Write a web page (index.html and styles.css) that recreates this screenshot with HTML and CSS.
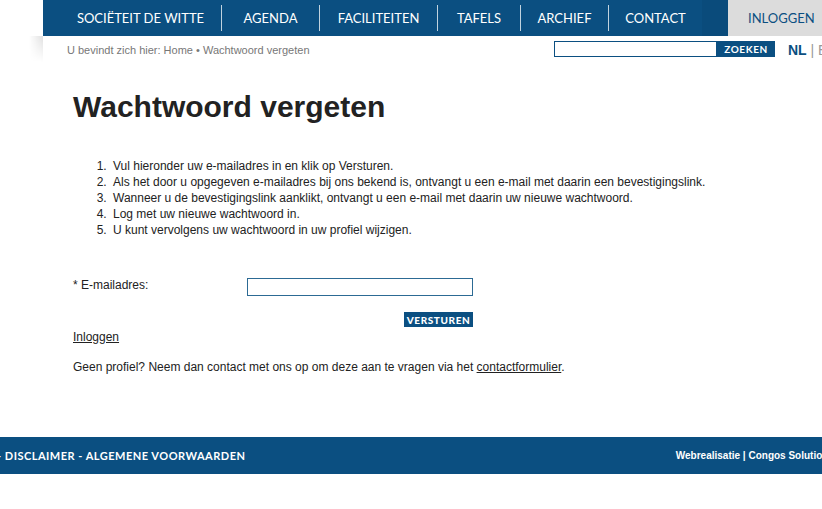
FILE: index.html
```html
<!DOCTYPE html>
<html lang="nl">
<head>
<meta charset="utf-8">
<title>Wachtwoord vergeten</title>
<link rel="stylesheet" href="styles.css">
</head>
<body>
<div class="site">
  <header class="topbar">
    <nav class="mainnav">
      <a class="nav-item w1" href="#">SOCIËTEIT DE WITTE</a>
      <a class="nav-item w2 sep" href="#">AGENDA</a>
      <a class="nav-item w3 sep" href="#">FACILITEITEN</a>
      <a class="nav-item w4 sep" href="#">TAFELS</a>
      <a class="nav-item w5 sep" href="#">ARCHIEF</a>
      <a class="nav-item w6 sep" href="#">CONTACT</a>
      <span class="nav-gap"></span>
    </nav>
    <a class="login-tab" href="#">INLOGGEN</a>
  </header>
  <div class="subbar">
    <div class="breadcrumb">U bevindt zich hier: Home • Wachtwoord vergeten</div>
    <form class="search">
      <input class="search-input" type="text">
      <button class="search-btn" type="button">ZOEKEN</button>
    </form>
    <div class="lang"><b>NL</b> <span class="pipe">|</span> <span class="en">EN</span></div>
  </div>
  <main class="content">
    <h1 class="title">Wachtwoord vergeten</h1>
    <ol class="steps">
      <li>Vul hieronder uw e-mailadres in en klik op Versturen.</li>
      <li>Als het door u opgegeven e-mailadres bij ons bekend is, ontvangt u een e-mail met daarin een bevestigingslink.</li>
      <li>Wanneer u de bevestigingslink aanklikt, ontvangt u een e-mail met daarin uw nieuwe wachtwoord.</li>
      <li>Log met uw nieuwe wachtwoord in.</li>
      <li>U kunt vervolgens uw wachtwoord in uw profiel wijzigen.</li>
    </ol>
    <form class="reset-form">
      <div class="field">
        <label class="field-label">* E-mailadres:</label>
        <input class="field-input" type="text">
      </div>
      <div class="actions">
        <button class="submit" type="button">VERSTUREN</button>
      </div>
    </form>
    <p class="login-link"><a href="#">Inloggen</a></p>
    <p class="note">Geen profiel? Neem dan contact met ons op om deze aan te vragen via het <a href="#">contactformulier</a>.</p>
  </main>
</div>
<footer class="footer">
  <div class="footer-links">- DISCLAIMER - ALGEMENE VOORWAARDEN</div>
  <div class="credits">Webrealisatie | Congos Solutions</div>
</footer>
</body>
</html>
```
FILE: styles.css
```css
html, body {
  margin: 0;
  padding: 0;
  background: #fff;
  overflow: hidden;
}
body {
  font-family: "Liberation Sans", Arial, sans-serif;
  color: #222;
  width: 822px;
}
a { color: inherit; }

.site {
  margin-left: 43px;
  width: 900px;
}

/* top navigation */
.topbar {
  display: flex;
  height: 36px;
  background: #0b4f81;
}
.mainnav {
  display: flex;
  align-items: center;
  height: 36px;
  padding-left: 17px;
}
.nav-item {
  display: block;
  text-align: center;
  color: #fff;
  text-decoration: none;
  font-family: Lato, "Open Sans", sans-serif;
  font-size: 13px;
  line-height: 26px;
  box-sizing: border-box;
}
.sep {
  border-left: 1px solid rgba(255,255,255,0.75);
}
.w1 { width: 161px; }
.w2 { width: 98px; }
.w3 { width: 118px; }
.w4 { width: 83px; }
.w5 { width: 88px; }
.w6 { width: 94px; }
.nav-gap {
  display: block;
  width: 26px;
  height: 36px;
  background: #0a4b7b;
}
.login-tab {
  flex: 1;
  background: #dcdcdc;
  color: #0b4f81;
  text-decoration: none;
  font-family: Lato, "Open Sans", sans-serif;
  font-size: 13px;
  line-height: 36px;
  padding-left: 20px;
}

/* breadcrumb + search */
.subbar {
  position: relative;
  display: flex;
  align-items: flex-start;
  height: 28px;
}
.subbar::before {
  content: "";
  position: absolute;
  left: -14px;
  top: 0;
  width: 14px;
  height: 26px;
  background: linear-gradient(to right, rgba(255,255,255,0), rgba(0,0,0,0.12));
  -webkit-mask-image: linear-gradient(to bottom, #000, rgba(0,0,0,0));
  mask-image: linear-gradient(to bottom, #000, rgba(0,0,0,0));
}
.breadcrumb {
  width: 511px;
  padding-left: 24px;
  box-sizing: border-box;
  font-size: 11px;
  color: #777;
  padding-top: 8px;
}
.search {
  display: flex;
  margin: 5px 0 0;
}
.search-input {
  width: 163px;
  height: 16px;
  box-sizing: border-box;
  border: 1px solid #0b4f81;
  margin: 0;
  padding: 0;
}
.search-btn {
  width: 58px;
  height: 16px;
  margin: 0;
  padding: 0;
  border: 0;
  background: #0b4f81;
  color: #fff;
  font-family: Lato, sans-serif;
  font-weight: 700;
  font-size: 10px;
  letter-spacing: 0.6px;
}
.lang {
  margin-left: 13px;
  font-size: 14px;
  line-height: 16px;
  margin-top: 6px;
  color: #0b4f81;
  white-space: nowrap;
}
.lang .pipe, .lang .en { color: #999; }

/* content */
.content {
  padding-left: 30px;
  padding-bottom: 62px;
}
.title {
  margin: 26px 0 0;
  font-size: 30px;
  font-weight: bold;
  line-height: 34px;
  color: #222;
}
.steps {
  margin: 34px 0 0;
  padding-left: 37px;
  font-size: 12px;
  line-height: 16px;
}
.steps li {
  padding-left: 3px;
}
.reset-form {
  margin-top: 40px;
}
.field {
  display: flex;
  align-items: center;
  font-size: 12px;
}
.field-label {
  width: 174px;
  padding-bottom: 4px;
}
.field-input {
  width: 226px;
  height: 18px;
  box-sizing: border-box;
  border: 1px solid #2c6a94;
  margin: 0;
  padding: 0;
}
.actions {
  display: flex;
  justify-content: flex-end;
  width: 400px;
  margin-top: 16px;
}
.submit {
  width: 69px;
  height: 15px;
  margin: 0;
  padding: 0;
  border: 0;
  background: #0b4f81;
  color: #fff;
  font-family: Lato, sans-serif;
  font-weight: 900;
  font-size: 10px;
  letter-spacing: 0.6px;
}
.login-link {
  margin: 2px 0 0;
  font-size: 12px;
  line-height: 16px;
}
.note {
  margin: 14px 0 0;
  font-size: 12px;
  line-height: 16px;
}

/* footer */
.footer {
  display: flex;
  justify-content: space-between;
  align-items: center;
  height: 37px;
  background: #0b4f81;
  color: #fff;
  white-space: nowrap;
  overflow: hidden;
}
.footer-links {
  margin-left: -3px;
  font-family: Lato, sans-serif;
  font-weight: 700;
  font-size: 11px;
  letter-spacing: 0.5px;
}
.credits {
  font-size: 10px;
  font-weight: bold;
  margin-right: -12px;
}
```
